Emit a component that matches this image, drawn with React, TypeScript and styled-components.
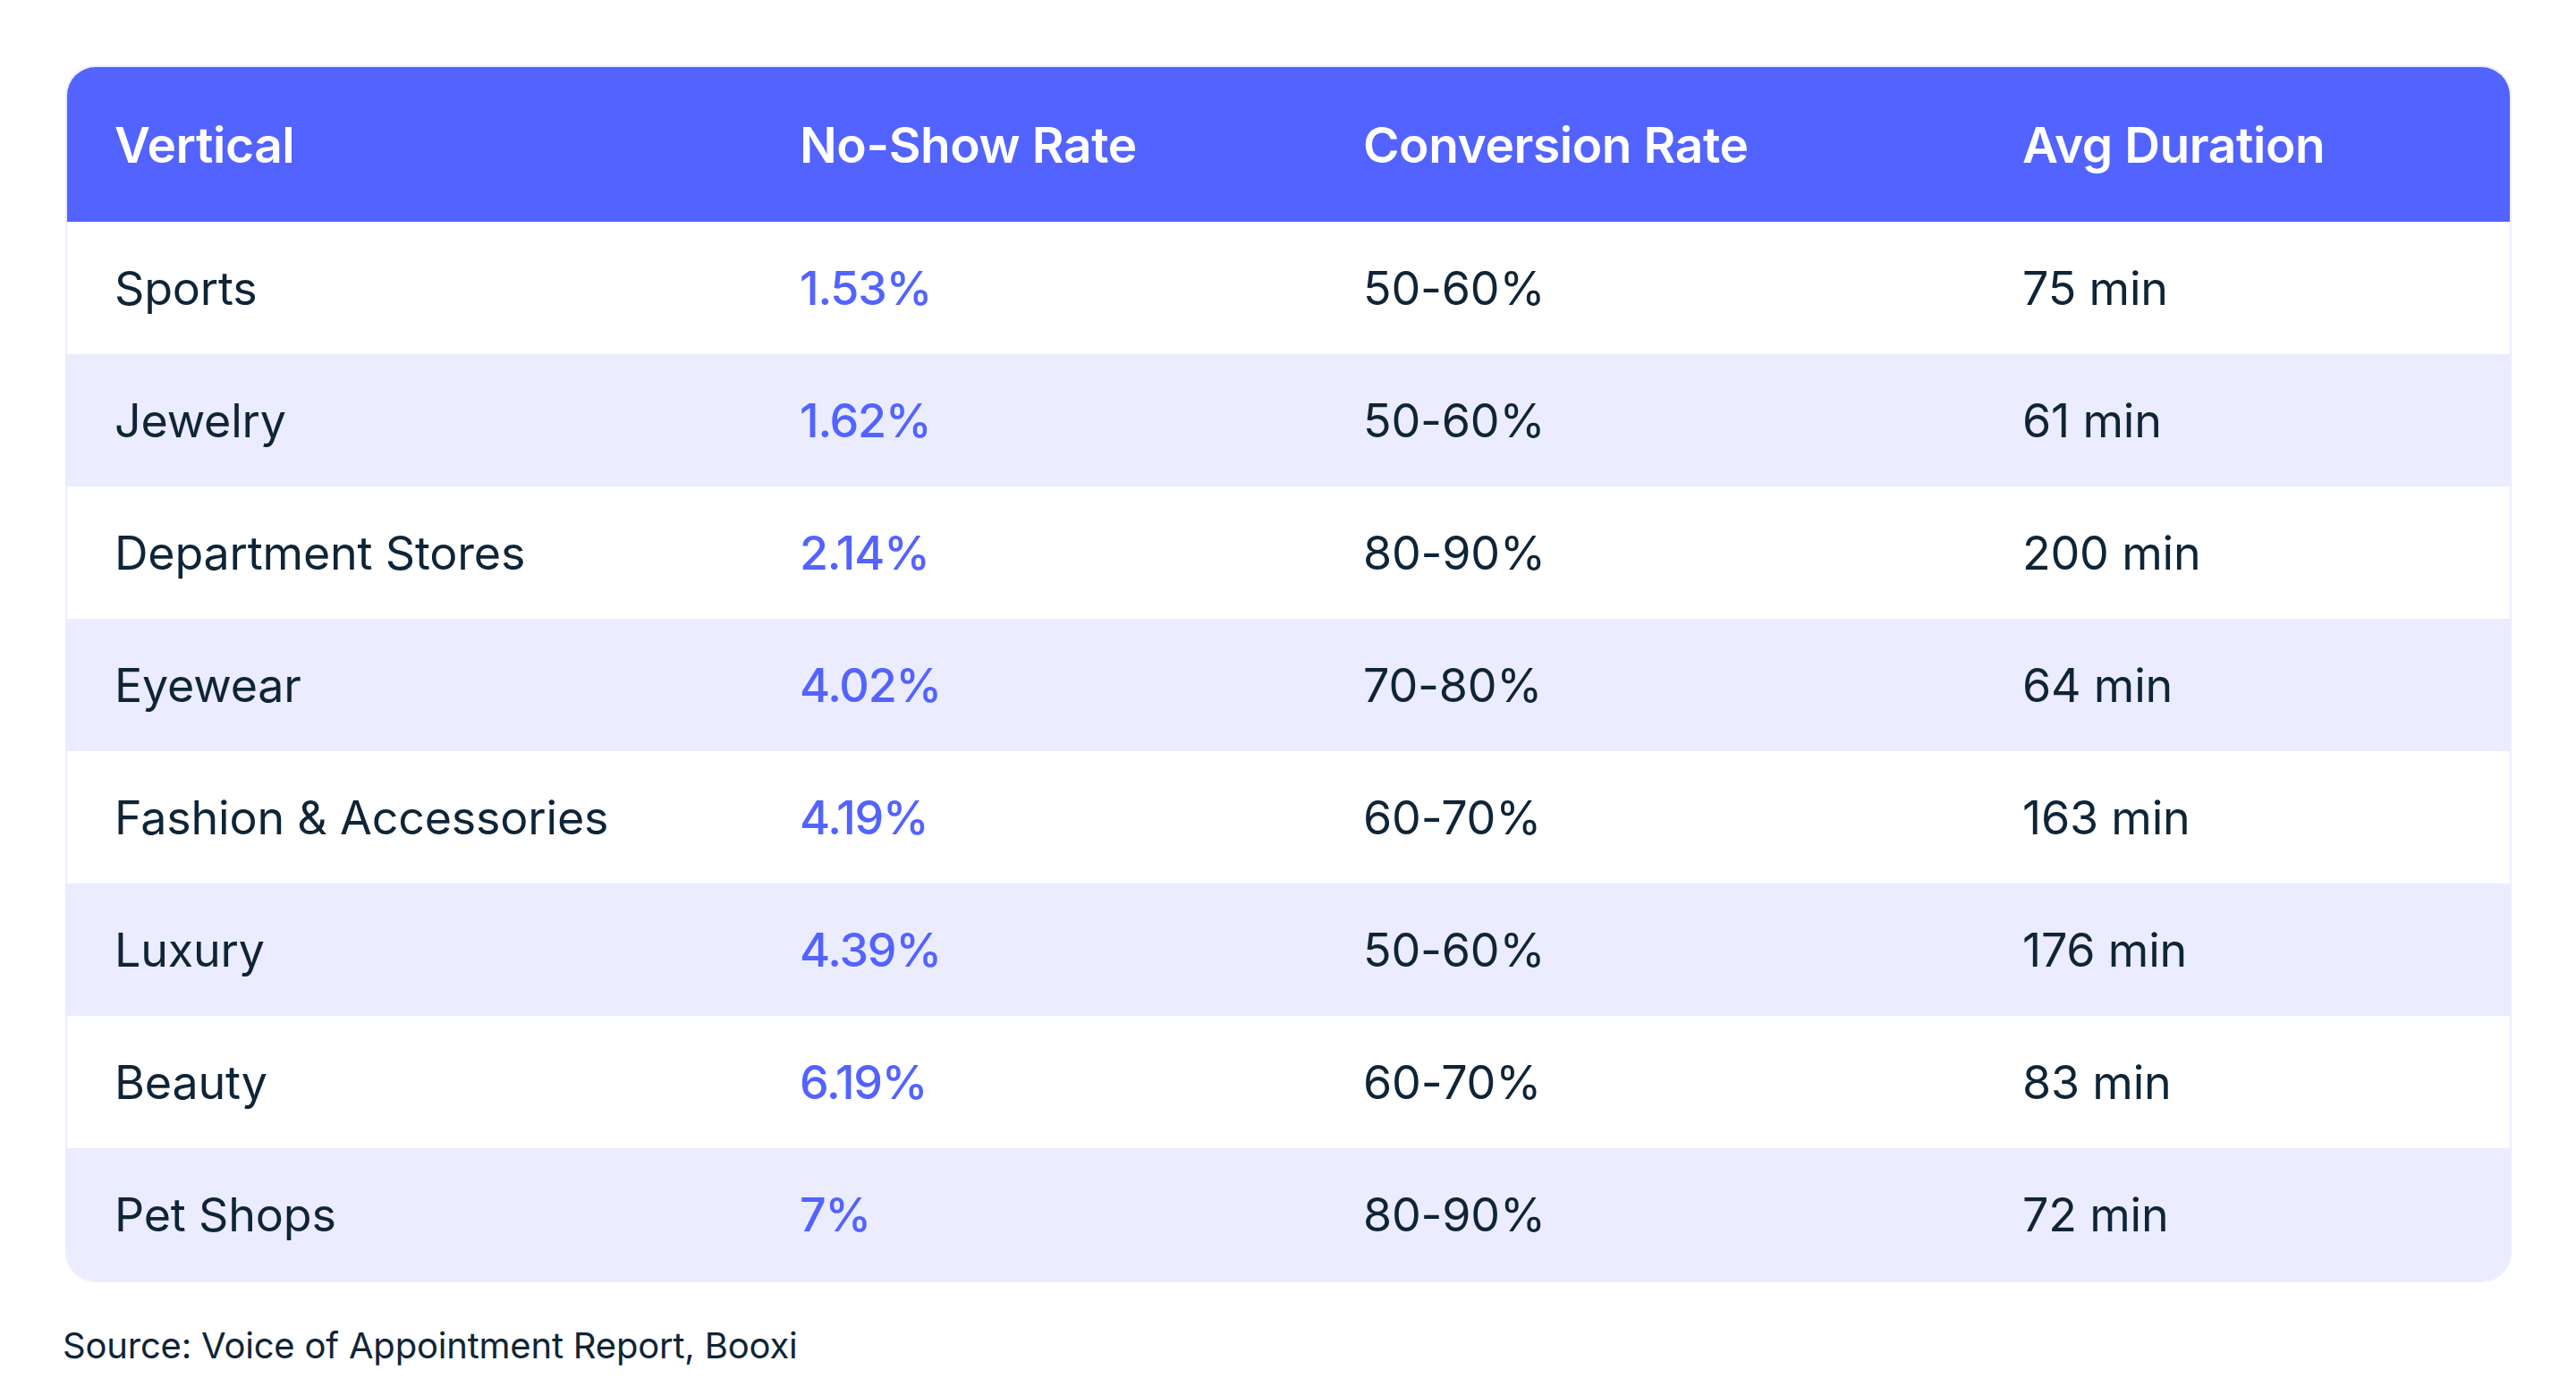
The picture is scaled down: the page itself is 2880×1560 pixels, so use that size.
import React, { ReactElement } from 'react';
import styled, { createGlobalStyle } from 'styled-components';

interface IRow {
  vertical: string;
  noShow: string;
  conversion: string;
  duration: string;
}

const rows: IRow[] = [
  { vertical: 'Sports', noShow: '1.53%', conversion: '50-60%', duration: '75 min' },
  { vertical: 'Jewelry', noShow: '1.62%', conversion: '50-60%', duration: '61 min' },
  { vertical: 'Department Stores', noShow: '2.14%', conversion: '80-90%', duration: '200 min' },
  { vertical: 'Eyewear', noShow: '4.02%', conversion: '70-80%', duration: '64 min' },
  { vertical: 'Fashion & Accessories', noShow: '4.19%', conversion: '60-70%', duration: '163 min' },
  { vertical: 'Luxury', noShow: '4.39%', conversion: '50-60%', duration: '176 min' },
  { vertical: 'Beauty', noShow: '6.19%', conversion: '60-70%', duration: '83 min' },
  { vertical: 'Pet Shops', noShow: '7%', conversion: '80-90%', duration: '72 min' },
];

const GlobalStyle = createGlobalStyle`
  body {
    margin: 0;
    background: #ffffff;
    font-family: Inter, "Noto Sans", sans-serif;
    color: #0f2537;
  }
`;

const App = (): ReactElement => (
  <>
    <GlobalStyle />
    <SPage>
      <STable>
        <SHeaderRow>
          <SHeadCell>Vertical</SHeadCell>
          <SHeadCell>No-Show Rate</SHeadCell>
          <SHeadCell>Conversion Rate</SHeadCell>
          <SHeadCell>Avg Duration</SHeadCell>
        </SHeaderRow>
        {rows.map((row, i) => (
          <SRow key={row.vertical} shaded={i % 2 === 1}>
            <SCell>{row.vertical}</SCell>
            <SCell accent>{row.noShow}</SCell>
            <SCell>{row.conversion}</SCell>
            <SCell>{row.duration}</SCell>
          </SRow>
        ))}
      </STable>
      <SSource>Source: Voice of Appointment Report, Booxi</SSource>
    </SPage>
  </>
);

export default App;

const SPage = styled.div`
  padding: 73px 0 0 73px;
`;

const STable = styled.div`
  width: 2735px;
  box-sizing: border-box;
  border: 2px solid #eceeff;
  border-radius: 34px;
  overflow: hidden;
`;

const columns = `
  display: grid;
  grid-template-columns: 766px 630px 737px 1fr;
  align-items: center;
  padding-left: 53px;
`;

const SHeaderRow = styled.div`
  ${columns}
  height: 173px;
  background: #5263ff;
`;

const SHeadCell = styled.div`
  color: #ffffff;
  font-size: 55px;
  font-weight: 600;
  letter-spacing: -0.4px;
`;

const SRow = styled.div<{ shaded: boolean }>`
  ${columns}
  height: 148px;
  background: ${({ shaded }) => (shaded ? '#ebecfe' : '#ffffff')};
`;

const SCell = styled.div<{ accent?: boolean }>`
  font-size: 52px;
  font-weight: ${({ accent }) => (accent ? 500 : 400)};
  color: ${({ accent }) => (accent ? '#5263ff' : '#0f2537')};
  letter-spacing: ${({ accent }) => (accent ? '-1.2px' : '-0.2px')};
`;

const SSource = styled.div`
  margin: 46px 0 0 -3px;
  font-size: 40px;
  color: #0f2537;
  letter-spacing: -0.2px;
`;
